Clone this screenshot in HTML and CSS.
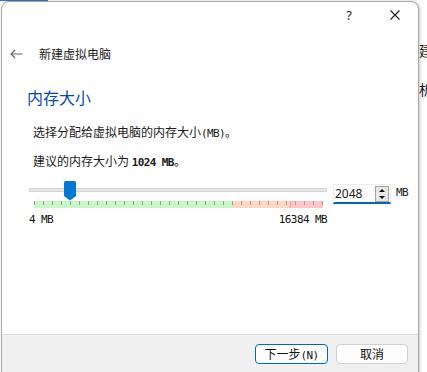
FILE: index.html
```html
<!DOCTYPE html>
<html lang="zh-CN">
<head>
    <meta charset="utf-8">
    <title>新建虚拟电脑</title>
    <link rel="stylesheet" href="styles.css">
</head>
<body>
<div class="desktop">
    <div class="strip-blue"></div>
    <div class="behind">
        <p class="behind-a">建</p>
        <p class="behind-b">析</p>
    </div>

    <div class="dialog">
        <div class="titlebar">
            <span class="tb-btn">?</span>
            <span class="tb-btn">
                <svg width="10" height="10" viewBox="0 0 10 10"><path d="M0.5 0.5 L9.5 9.5 M9.5 0.5 L0.5 9.5" stroke="#1b1b1b" stroke-width="1.1" fill="none"/></svg>
            </span>
        </div>

        <div class="main">
            <div class="nav">
                <svg class="back" width="13" height="10" viewBox="0 0 13 10"><path d="M12.5 5 H1 M5 1 L1 5 L5 9" stroke="#6b6b6b" stroke-width="1.2" fill="none"/></svg>
                <span class="nav-title">新建虚拟电脑</span>
            </div>

            <h1 class="page-title">内存大小</h1>
            <p class="line line-first">选择分配给虚拟电脑的内存大小<span class="hw">(MB)</span>。</p>
            <p class="line line-second">建议的内存大小为 <strong class="hw">1024 MB</strong>。</p>

            <div class="slider-row">
                <div class="slider">
                    <div class="track"></div>
                    <svg class="thumb" style="left: 35px" width="12" height="20" viewBox="0 0 12 20"><path d="M1.5 0 H10.5 Q12 0 12 1.5 V15 L6 19.5 L0 15 V1.5 Q0 0 1.5 0 Z" fill="#0078d4"/></svg>
                    <div class="scale"></div>
                    <div class="scale-labels">
                        <span class="hw">4 MB</span>
                        <span class="hw">16384 MB</span>
                    </div>
                </div>
                <div class="spin">
                    <span class="spin-value">2048</span>
                    <span class="spin-btns">
                        <span class="spin-up"></span>
                        <span class="spin-down"></span>
                    </span>
                </div>
                <span class="hw unit">MB</span>
            </div>
        </div>

        <div class="footer">
            <button class="btn btn-default">下一步<span class="hw">(N)</span></button>
            <button class="btn">取消</button>
        </div>
    </div>
</div>
</body>
</html>
```

FILE: styles.css
```css
html, body {
    margin: 0;
    padding: 0;
    background: #fff;
}

body {
    font: 12px/16px "Noto Sans CJK SC", "Noto Sans", sans-serif;
    color: #1a1a1a;
}

.desktop {
    position: relative;
    width: 427px;
    height: 372px;
    overflow: hidden;
    background: #fff;
}

.strip-blue {
    width: 48px;
    height: 1px;
    background: #2b79d0;
}

.behind p {
    position: absolute;
    left: 419px;
    margin: 0;
    font-size: 14px;
    line-height: 14px;
    color: #111;
}

.behind-a {
    top: 43px;
}

.behind-b {
    top: 82px;
}

.dialog {
    position: absolute;
    left: 1px;
    top: 1px;
    width: 416px;
    height: 378px;
    border: 1px solid #a8a8a8;
    border-radius: 8px 8px 0 0;
    background: #fff;
    box-shadow: 1px 0 3px rgba(0, 0, 0, .22);
    display: flex;
    flex-direction: column;
}

.titlebar {
    height: 30px;
    display: flex;
    justify-content: flex-end;
}

.tb-btn {
    width: 46px;
    height: 25px;
    display: flex;
    align-items: center;
    justify-content: center;
    font: 13px "Noto Sans", sans-serif;
    color: #1b1b1b;
}

.main {
    flex: 1;
}

.nav {
    margin-top: 12px;
    height: 20px;
    display: flex;
    align-items: center;
    padding-left: 8px;
}

.back {
    margin-right: 16px;
}

.nav-title {
    font-size: 12px;
    color: #222;
}

.page-title {
    margin: 23px 0 0;
    padding-left: 25px;
    font-size: 16px;
    line-height: 20px;
    font-weight: normal;
    color: #0a47ac;
}

.line {
    margin: 0;
    padding-left: 31px;
    line-height: 16px;
}

.line-first {
    margin-top: 17px;
}

.line-second {
    margin-top: 11px;
}

.hw {
    font-family: "DejaVu Sans Mono", monospace;
    font-size: 11px;
    letter-spacing: -0.6px;
}

strong.hw {
    font-weight: bold;
}

.slider-row {
    margin-top: 10px;
    padding-left: 27px;
    display: flex;
    align-items: flex-start;
}

.slider {
    position: relative;
    width: 298px;
    padding-top: 7px;
}

.track {
    height: 2px;
    border: 1px solid #d4d4d4;
    background: #e7e7e7;
}

.thumb {
    position: absolute;
    top: 0;
}

.scale {
    margin: 9px 5px 0;
    width: 289px;
    height: 7px;
    background:
        repeating-linear-gradient(to right, #a59d92 0 1px, transparent 1px 9px) top left / 100% 4px no-repeat,
        linear-gradient(to right, #c8f8c8 0 199px, #ffd6c2 199px 256px, #f9a0a0 256px 257px, #ffc6c6 257px);
}

.scale-labels {
    margin-top: 6px;
    display: flex;
    justify-content: space-between;
    line-height: 12px;
    color: #111;
}

.spin {
    margin: 3px 0 0 6px;
    width: 56px;
    height: 17px;
    border: 1px solid #ececec;
    border-bottom: 2px solid #0067c0;
    display: flex;
    align-items: center;
    justify-content: space-between;
}

.spin-value {
    padding-left: 1px;
    font: 12px "Noto Sans", sans-serif;
}

.spin-btns {
    width: 12px;
    height: 14px;
    margin-right: 1px;
    border: 1px solid #a4a4a4;
    background: #e6e6e6;
    display: flex;
    flex-direction: column;
    align-items: center;
    justify-content: space-around;
}

.spin-up, .spin-down {
    width: 0;
    height: 0;
    border-left: 3px solid transparent;
    border-right: 3px solid transparent;
}

.spin-up {
    border-bottom: 3px solid #111;
}

.spin-down {
    border-top: 3px solid #111;
}

.unit {
    margin: 6px 0 0 5px;
    line-height: 12px;
}

.footer {
    height: 46px;
    border-top: 1px solid #dcdcdc;
    background: #f0f0f0;
    display: flex;
    justify-content: flex-end;
    align-items: flex-start;
    gap: 8px;
    padding: 9px 10px 0 0;
    box-sizing: border-box;
}

.btn {
    width: 72px;
    height: 20px;
    padding: 0;
    border: 1px solid #d0d0d0;
    border-radius: 4px;
    background: #fdfdfd;
    font: 12px/18px "Noto Sans CJK SC", sans-serif;
    color: #111;
}

.btn-default {
    width: 73px;
    border-color: #0067c0;
    background: #fff;
}
```
